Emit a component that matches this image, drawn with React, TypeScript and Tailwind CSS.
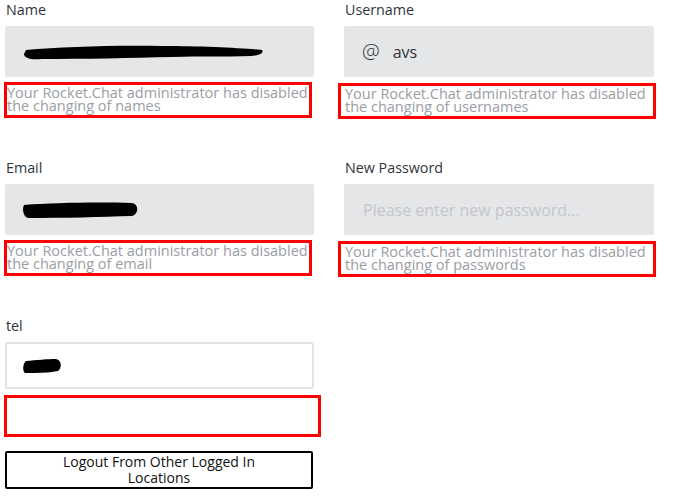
import type { ReactNode } from "react";

function Scribble({ w, h, d }: { w: number; h: number; d: string }) {
  return (
    <svg width={w} height={h} viewBox={`0 0 ${w} ${h}`} className="block">
      <path d={d} fill="#000" />
    </svg>
  );
}

function Field({
  label,
  children,
  note,
  right,
}: {
  label: string;
  children: ReactNode;
  note: string;
  right?: boolean;
}) {
  return (
    <div className="flex flex-col">
      <label className="h-5 pl-[1px] text-[14.3px] leading-5 text-[#2f343d]">{label}</label>
      <div className="mt-[6px] flex h-[51px] items-center rounded-[2px] bg-[#e5e6e8] px-[17px]">
        {children}
      </div>
      <div
        className={
          right
            ? "mt-[6px] ml-[-6px] mr-[-2px] h-[36px] border-[3px] border-[#ff0000] pl-[4px] pt-[1px] text-[14.5px] leading-[13px] text-[#9a9da4]"
            : "mt-[5px] ml-[-1px] mr-[2px] h-[36px] border-[3px] border-[#ff0000] pl-[0px] pt-[1px] text-[14.5px] leading-[13px] text-[#9a9da4]"
        }
      >
        {note}
      </div>
    </div>
  );
}

export default function App() {
  return (
    <div className="h-[498px] w-[681px] bg-white px-[5px] font-['Open_Sans',sans-serif]">
      <div className="grid w-[649px] grid-cols-[309px_310px] gap-x-[30px] gap-y-[39px]">
        <Field label="Name" note="Your Rocket.Chat administrator has disabled the changing of names">
          <Scribble
            w={242}
            h={20}
            d="M4 8 C40 5 90 3 140 4 C180 4 220 6 240 8 C242 11 238 13 230 14 C200 15 180 14 150 15 C110 16 60 17 20 17 C8 18 2 16 2 12 Z"
          />
        </Field>
        <Field
          right
          label="Username"
          note="Your Rocket.Chat administrator has disabled the changing of usernames"
        >
          <span className="ml-[1px] text-[20px] font-light leading-none text-[#2f343d]">@</span>
          <span className="ml-[13px] text-[16px] text-[#2f343d]">avs</span>
        </Field>
        <Field label="Email" note="Your Rocket.Chat administrator has disabled the changing of email">
          <Scribble
            w={118}
            h={20}
            d="M2 5 C30 3 70 2 110 3 C117 4 117 14 110 16 C80 17 40 18 6 18 C1 17 0 8 2 5 Z"
          />
        </Field>
        <Field
          right
          label="New Password"
          note="Your Rocket.Chat administrator has disabled the changing of passwords"
        >
          <span className="ml-[2px] text-[16px] text-[#c4c6ca]">Please enter new password...</span>
        </Field>

        <div className="flex flex-col">
          <label className="h-5 pl-[1px] text-[14.3px] leading-5 text-[#2f343d]">tel</label>
          <div className="mt-[6px] flex h-[47px] items-center rounded-[2px] border-2 border-[#e1e4e8] bg-white px-[15px]">
            <Scribble
              w={40}
              h={16}
              d="M4 3 C14 2 26 1 34 1 C40 2 40 10 36 13 C26 15 14 15 3 15 C0 13 1 5 4 3 Z"
            />
          </div>
          <div className="mt-[6px] ml-[-1px] mr-[-7px] h-[42px] border-[3px] border-[#ff0000]" />
          <button className="mt-[14px] flex h-[38px] w-[308px] flex-col items-center justify-center rounded-[2px] border-2 border-black bg-white text-[14px] leading-[16px] text-[#111]">
            <span>Logout From Other Logged In</span>
            <span>Locations</span>
          </button>
        </div>
      </div>
    </div>
  );
}
